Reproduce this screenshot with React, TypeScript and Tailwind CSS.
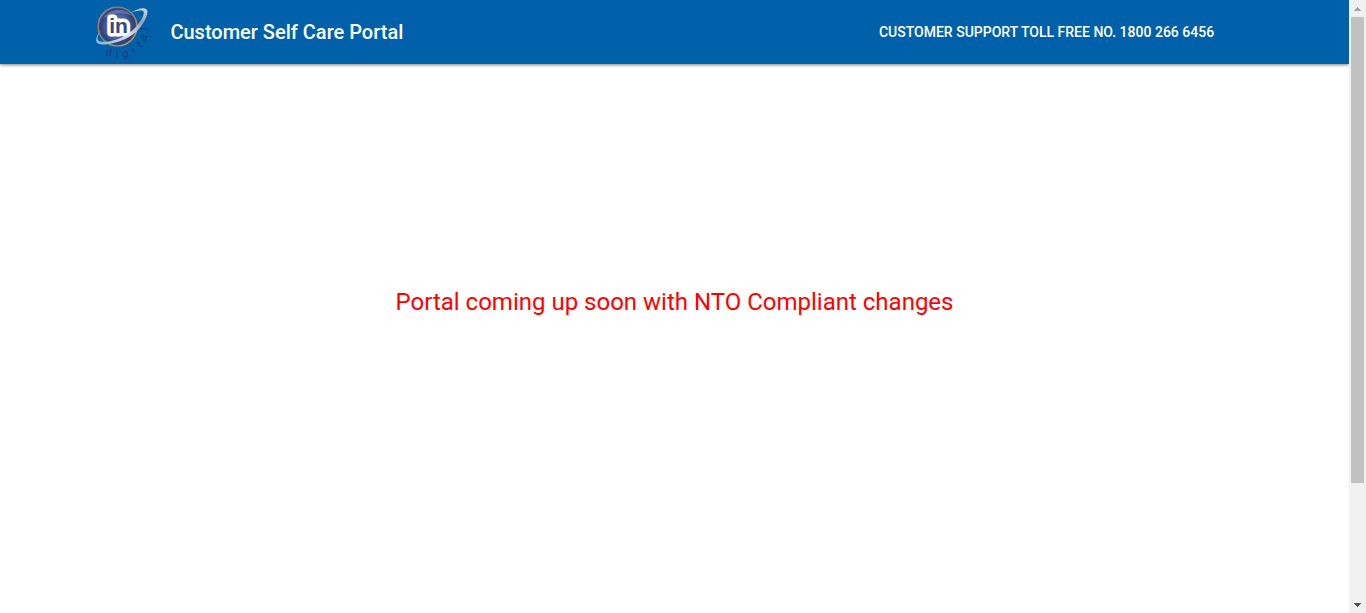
const letters = [
  { ch: "d", x: 15, y: 48, r: 12 },
  { ch: "i", x: 23, y: 50, r: 4 },
  { ch: "g", x: 31, y: 49, r: -16 },
  { ch: "i", x: 39, y: 45, r: -28 },
  { ch: "t", x: 45, y: 40, r: -42 },
  { ch: "a", x: 49, y: 33, r: -62 },
  { ch: "l", x: 51, y: 25, r: -84 },
];

function Logo() {
  return (
    <svg className="size-14 shrink-0" viewBox="0 0 56 56" role="img" aria-label="IN Digital">
      <defs>
        <radialGradient id="globe" cx="0.5" cy="0.5" r="0.5">
          <stop offset="0" stopColor="#6d86b5" />
          <stop offset="0.6" stopColor="#4a619a" />
          <stop offset="0.88" stopColor="#2b3d78" />
          <stop offset="1" stopColor="#5b6f9c" />
        </radialGradient>
        <linearGradient id="rim" x1="0" y1="0" x2="1" y2="1">
          <stop offset="0" stopColor="#8aa6b4" />
          <stop offset="0.3" stopColor="#b5764c" />
          <stop offset="0.5" stopColor="#5f9a72" />
          <stop offset="0.75" stopColor="#d98a3d" />
          <stop offset="1" stopColor="#c9a552" />
        </linearGradient>
        <linearGradient id="orbit" x1="0" y1="1" x2="1" y2="0">
          <stop offset="0" stopColor="#8fb0d2" />
          <stop offset="0.45" stopColor="#dde4ec" />
          <stop offset="0.75" stopColor="#8f9fb5" />
          <stop offset="1" stopColor="#d5dde6" />
        </linearGradient>
      </defs>
      <circle cx="23.5" cy="22.5" r="19.500" fill="url(#globe)" stroke="url(#rim)" strokeWidth="1.2" />
      <path d="M9 15C13 5 30 2 38 12C30 8 17 8 9 15Z" fill="#8193b7" opacity="0.55" />
      <text
        x="24.5"
        y="28.5"
        textAnchor="middle"
        className="font-['Liberation_Sans',sans-serif] text-[21px] font-bold"
        fill="#34497f"
        stroke="#ffffff"
        strokeWidth="7"
        strokeLinejoin="round"
        paintOrder="stroke"
      >
        in
      </text>
      <path
        d="M36 9C44 4 51 3 53 6C55 10 50 20 42 28C32 37 11 43 4 39.500C0 37 3 31 7 26C4 31 2 35 5 37C12 40 29 35 39 26C47 18 51 10 49.500 7.500C48 5.500 42 7 36 9Z"
        fill="url(#orbit)"
      />
      {letters.map((l, i) => (
        <text
          key={i}
          x={l.x}
          y={l.y}
          textAnchor="middle"
          dominantBaseline="central"
          transform={`rotate(${l.r} ${l.x} ${l.y})`}
          className="font-['Liberation_Sans',sans-serif] text-[11px]"
          fill="#1c3f86"
          stroke="#1c3f86"
          strokeWidth="0.3"
        >
          {l.ch}
        </text>
      ))}
    </svg>
  );
}

function Scrollbar() {
  return (
    <div className="flex w-[17px] shrink-0 flex-col bg-[#f1f1f1]" aria-hidden="true">
      <div className="flex h-[17px] items-center justify-center">
        <svg className="h-1 w-[7px]" viewBox="0 0 7 4" shapeRendering="crispEdges">
          <path d="M3 0h1v1h1v1h1v1h1v1H0V3h1V2h1V1h1Z" fill="#a3a3a3" />
        </svg>
      </div>
      <div className="flex-1 px-0.5">
        <div className="h-[80.5%] bg-[#c1c1c1]" />
      </div>
      <div className="flex h-[17px] items-center justify-center">
        <svg className="h-1 w-[7px]" viewBox="0 0 7 4" shapeRendering="crispEdges">
          <path d="M0 0h7v1H6v1H5v1H4v1H3V3H2V2H1V1H0Z" fill="#505050" />
        </svg>
      </div>
    </div>
  );
}

export default function App() {
  return (
    <div className="flex h-screen bg-white font-['Roboto',sans-serif]">
      <div className="flex min-w-0 flex-1 flex-col">
        <header className="flex h-16 shrink-0 items-center justify-between bg-[#0061aa] pr-[10%] pl-[7%] text-white shadow-[0_1px_3px_rgba(0,0,0,0.5)]">
          <div className="flex items-center gap-5">
            <Logo />
            <h1 className="text-xl font-medium">Customer Self Care Portal</h1>
          </div>
          <p className="text-sm font-medium">CUSTOMER SUPPORT TOLL FREE NO. 1800 266 6456</p>
        </header>
        <main className="flex flex-1 flex-col items-center px-4 pt-[222px]">
          <p className="text-center text-2xl text-[#ff0000]">
            Portal coming up soon with NTO Compliant changes
          </p>
        </main>
      </div>
      <Scrollbar />
    </div>
  );
}
